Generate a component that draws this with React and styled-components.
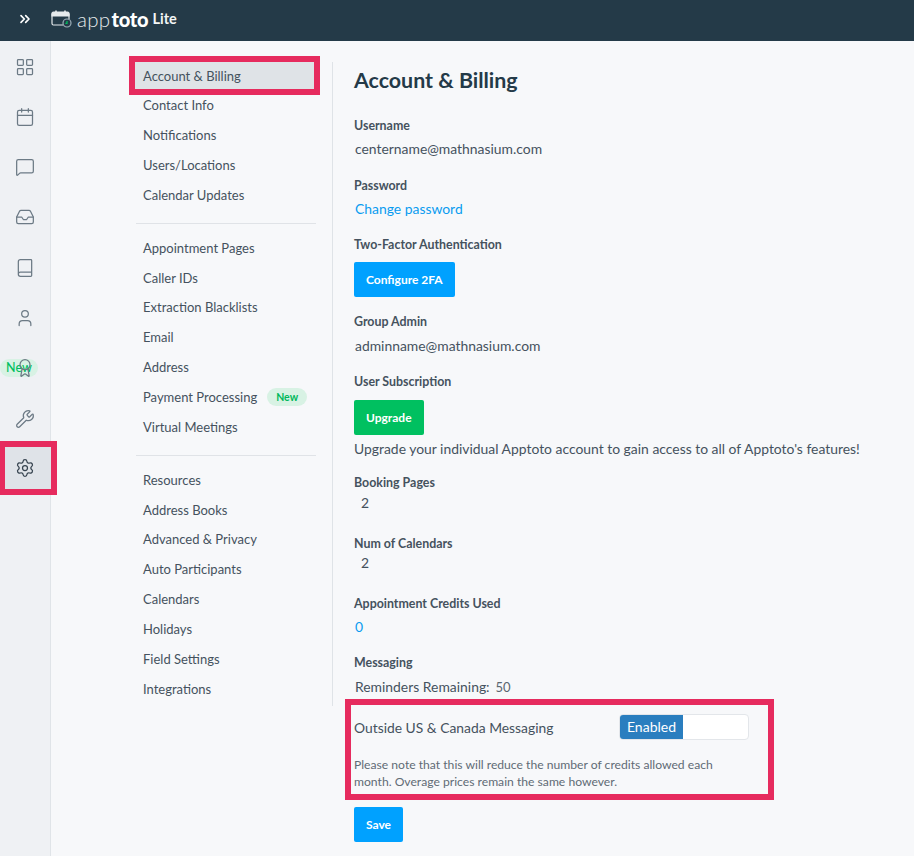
import styled, { createGlobalStyle } from "styled-components";
import {
  Award,
  Book,
  Calendar,
  ChevronsRight,
  Inbox,
  LayoutGrid,
  MessageSquare,
  Settings,
  User,
  Wrench,
} from "lucide-react";

const GlobalStyle = createGlobalStyle`
  html, body {
    margin: 0;
    padding: 0;
    background: #f7f8fa;
    font-family: "Lato", "Noto Sans", sans-serif;
    color: #36434f;
  }
`;

const Page = styled.div`
  width: 914px;
  height: 856px;
  overflow: hidden;
  display: flex;
  flex-direction: column;
`;

const TopBar = styled.header`
  height: 41px;
  flex: none;
  box-sizing: border-box;
  padding-bottom: 3px;
  background: #243a48;
  display: flex;
  align-items: center;
  color: white;
`;

const Expand = styled.div`
  width: 50px;
  display: flex;
  justify-content: center;
  color: white;
`;

const Brand = styled.div`
  display: flex;
  align-items: center;
  gap: 5px;
  margin-left: 1px;
  font-size: 20.5px;
  line-height: 20px;
  color: #e6eaed;
`;

const BrandThin = styled.span`
  font-weight: 300;
  letter-spacing: 0.3px;
`;

const BrandBold = styled.span`
  font-size: 20px;
  font-weight: 900;
  color: white;
  margin-left: -4px;
  letter-spacing: -0.2px;
`;

const BrandLite = styled.span`
  font-size: 14.5px;
  font-weight: 700;
  color: #f3f5f6;
  margin-left: -1px;
`;

const Body = styled.div`
  flex: 1;
  display: flex;
  min-height: 0;
`;

const Rail = styled.nav`
  width: 50px;
  flex: none;
  padding-top: 0.4px;
  background: #eff1f4;
  border-right: 1px solid #e0e4e8;
  display: flex;
  flex-direction: column;
`;

const RailItem = styled.div`
  position: relative;
  height: 50.3px;
  flex: none;
  display: flex;
  align-items: center;
  justify-content: center;
  color: #6c7a85;
`;

const RailActive = styled(RailItem)`
  box-sizing: border-box;
  width: 46px;
  height: 42px;
  margin: 3.2px 0 0 5px;
  padding-right: 6px;
  background: #dfe3e8;
  color: #36434f;
  outline: 6px solid #e62b5e;
`;

const RailBadge = styled.span`
  position: absolute;
  left: 0;
  top: 16px;
  width: 38px;
  height: 18px;
  border-radius: 9px;
  background: #d8f2e4;
  color: #00c060;
  font-size: 12.5px;
  font-weight: 500;
  line-height: 18px;
  text-align: center;
`;

const RailIcon = styled.span`
  position: relative;
  display: flex;
`;

const SettingsArea = styled.div`
  flex: 1;
  display: flex;
  padding: 21px 0 0 85px;
`;

const SubNav = styled.nav`
  width: 197px;
  height: 644px;
  flex: none;
  border-right: 1px solid #dfe3e7;
  box-sizing: border-box;
`;

const NavGroup = styled.div`
  width: 180px;
  padding-bottom: 11.25px;
  margin-bottom: 10.5px;
  border-bottom: 1px solid #e0e3e7;

  &:last-child {
    border-bottom: none;
  }
`;

const NavLink = styled.div`
  height: 27px;
  margin-bottom: 2.9px;
  padding-left: ${(p) => (p.$active ? "8px" : "7px")};
  display: flex;
  align-items: center;
  gap: 10px;
  font-size: 13px;
  color: #45525e;
  box-sizing: border-box;
  margin-left: ${(p) => (p.$active ? "-1px" : "0")};
  margin-right: ${(p) => (p.$active ? "2px" : "0")};
  background: ${(p) => (p.$active ? "#dfe3e7" : "transparent")};
  outline: ${(p) => (p.$active ? "6px solid #e62b5e" : "none")};
`;

const NewPill = styled.span`
  height: 18px;
  padding: 0 9px;
  border-radius: 9px;
  background: #d8f2e4;
  color: #00b85c;
  font-size: 10.5px;
  font-weight: 700;
  line-height: 18px;
`;

const Main = styled.main`
  margin-left: 21px;
  flex: 1;
`;

const Title = styled.h1`
  margin: 6px 0 25px;
  font-size: 21.4px;
  line-height: 24px;
  font-weight: 700;
  color: #243a48;
`;

const Field = styled.section`
  margin-bottom: ${(p) => p.$gap || "18.5px"};
`;

const Label = styled.div`
  font-size: 12.4px;
  font-weight: 700;
  line-height: 18px;
  color: #45525e;
  margin-bottom: ${(p) => p.$gap || "5px"};
`;

const Value = styled.div`
  font-size: 13.9px;
  line-height: 18px;
  padding-left: ${(p) => p.$indent || "1px"};
  color: #45525e;
`;

const LinkText = styled(Value)`
  color: #0a9cf0;
`;

const Blurb = styled(Value)`
  padding-left: 0;
  margin-top: 5px;
`;

const Button = styled.button`
  display: block;
  height: 35px;
  padding: 0 12px;
  border: none;
  border-radius: 2px;
  background: ${(p) => p.$bg || "#00a1ff"};
  color: white;
  font-family: inherit;
  font-size: 12px;
  font-weight: 700;
`;

const Remaining = styled.div`
  display: flex;
  gap: 6px;
  padding-left: 1px;
  font-size: 13.9px;
  line-height: 18px;
  color: #45525e;
  margin-bottom: 9px;
`;

const RemainingCount = styled.span`
  font-size: 13px;
  color: #5a6670;
`;

const Outlined = styled.section`
  width: 417px;
  height: 89px;
  margin: 0 0 13px -3px;
  padding-left: 3px;
  box-sizing: border-box;
  outline: 6px solid #e62b5e;
`;

const ToggleRow = styled.div`
  display: flex;
  align-items: center;
  justify-content: space-between;
  padding: 9px 19px 0 0;
  font-size: 13.85px;
  color: #45525e;
`;

const Toggle = styled.div`
  width: 130px;
  height: 26px;
  display: flex;
  background: white;
  border-radius: 4px;
  border: 1px solid #e3e6ea;
  box-sizing: border-box;
  overflow: hidden;
`;

const ToggleOn = styled.div`
  width: 63px;
  background: #2a7ebf;
  color: white;
  font-size: 14px;
  line-height: 24px;
  text-align: center;
`;

const Note = styled.p`
  margin: 16px 0 0;
  font-size: 12.15px;
  line-height: 17px;
  width: 375px;
  color: #5f6b75;
`;

const navGroups = [
  ["Account & Billing", "Contact Info", "Notifications", "Users/Locations", "Calendar Updates"],
  ["Appointment Pages", "Caller IDs", "Extraction Blacklists", "Email", "Address", "Payment Processing", "Virtual Meetings"],
  ["Resources", "Address Books", "Advanced & Privacy", "Auto Participants", "Calendars", "Holidays", "Field Settings", "Integrations"],
];

const railIcons = [LayoutGrid, Calendar, MessageSquare, Inbox, Book, User, Award, Wrench];

function LogoMark() {
  return (
    <svg width="21" height="18" viewBox="0 0 21 18" fill="none" stroke="#e6eaed" strokeWidth="1.2">
      <path d="M12 15H2.5A1.5 1.5 0 0 1 1 13.5V4h17v5" />
      <path d="M1 6V3.5A1.5 1.5 0 0 1 2.5 2H16.5A1.5 1.5 0 0 1 18 3.5V6H1Z" fill="#e6eaed" />
      <path d="M5 0.5v3M14 0.5v3" strokeWidth="1.6" />
      <circle cx="16" cy="13" r="4" stroke="#9fb0ba" />
      <path d="M16 11v2.3h-1.6" stroke="#00c060" />
    </svg>
  );
}

export default function App() {
  return (
    <Page>
      <GlobalStyle />
      <TopBar>
        <Expand>
          <ChevronsRight size={16} strokeWidth={2.5} />
        </Expand>
        <Brand>
          <LogoMark />
          <BrandThin>app</BrandThin>
          <BrandBold>toto</BrandBold>
          <BrandLite>Lite</BrandLite>
        </Brand>
      </TopBar>
      <Body>
        <Rail>
          {railIcons.map((Icon, i) => (
            <RailItem key={i}>
              {Icon === Award && <RailBadge>New</RailBadge>}
              <RailIcon>
                <Icon size={20} strokeWidth={1.5} />
              </RailIcon>
            </RailItem>
          ))}
          <RailActive>
            <Settings size={20} strokeWidth={1.5} />
          </RailActive>
        </Rail>
        <SettingsArea>
          <SubNav>
            {navGroups.map((group, g) => (
              <NavGroup key={g}>
                {group.map((item) => (
                  <NavLink key={item} $active={item === "Account & Billing"}>
                    {item}
                    {item === "Payment Processing" && <NewPill>New</NewPill>}
                  </NavLink>
                ))}
              </NavGroup>
            ))}
          </SubNav>
          <Main>
            <Title>Account &amp; Billing</Title>
            <Field>
              <Label>Username</Label>
              <Value>centername@mathnasium.com</Value>
            </Field>
            <Field>
              <Label>Password</Label>
              <LinkText>Change password</LinkText>
            </Field>
            <Field $gap="16px">
              <Label $gap="8px">Two-Factor Authentication</Label>
              <Button>Configure 2FA</Button>
            </Field>
            <Field $gap="18px">
              <Label $gap="6px">Group Admin</Label>
              <Value>adminname@mathnasium.com</Value>
            </Field>
            <Field $gap="16px">
              <Label $gap="9px">User Subscription</Label>
              <Button $bg="#00c060">Upgrade</Button>
              <Blurb>
                Upgrade your individual Apptoto account to gain access to all of Apptoto's features!
              </Blurb>
            </Field>
            <Field $gap="23px">
              <Label $gap="2px">Booking Pages</Label>
              <Value $indent="7px">2</Value>
            </Field>
            <Field $gap="23px">
              <Label $gap="1px">Num of Calendars</Label>
              <Value $indent="7px">2</Value>
            </Field>
            <Field $gap="18px">
              <Label>Appointment Credits Used</Label>
              <LinkText>0</LinkText>
            </Field>
            <Label $gap="6px">Messaging</Label>
            <Remaining>
              Reminders Remaining: <RemainingCount>50</RemainingCount>
            </Remaining>
            <Outlined>
              <ToggleRow>
                Outside US &amp; Canada Messaging
                <Toggle>
                  <ToggleOn>Enabled</ToggleOn>
                </Toggle>
              </ToggleRow>
              <Note>
                Please note that this will reduce the number of credits allowed each month. Overage prices remain the same however.
              </Note>
            </Outlined>
            <Button>Save</Button>
          </Main>
        </SettingsArea>
      </Body>
    </Page>
  );
}
